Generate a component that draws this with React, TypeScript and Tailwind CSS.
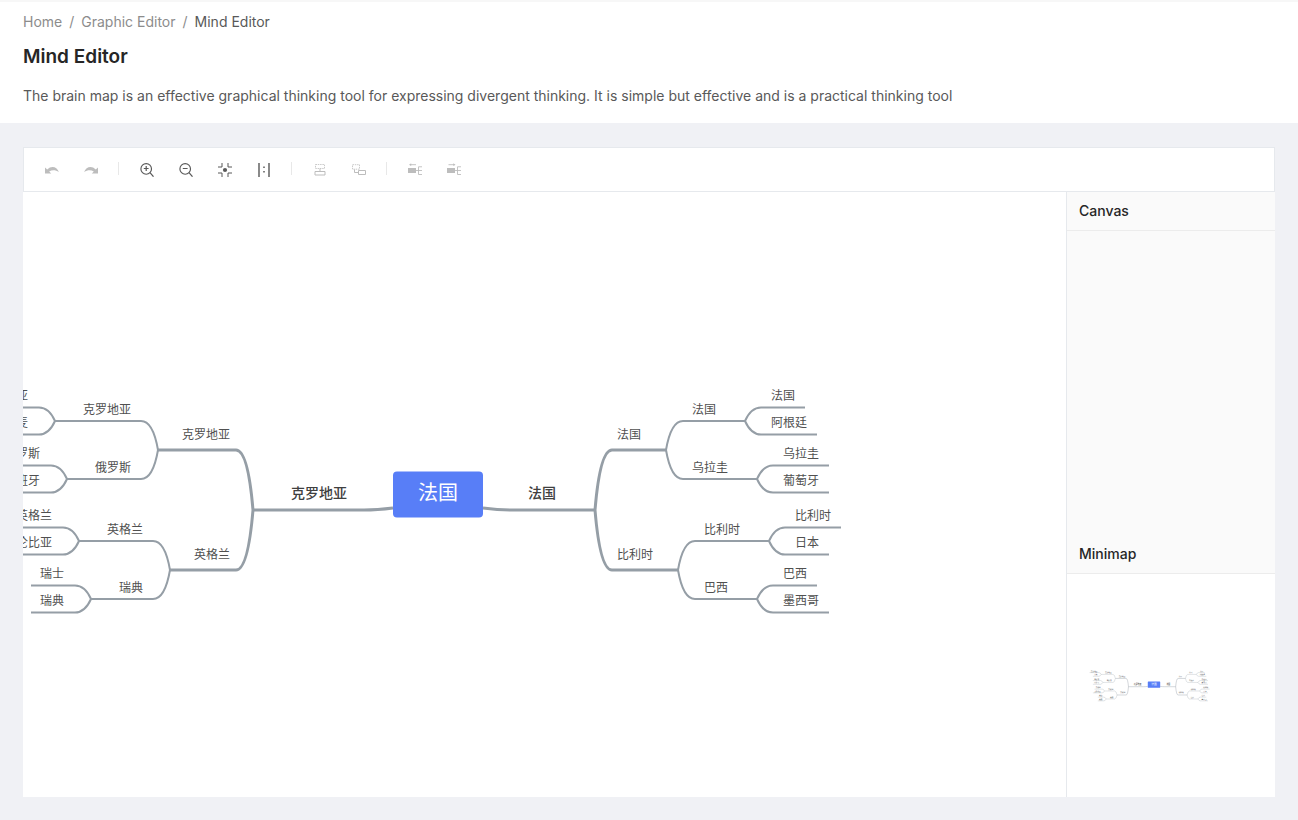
import type { ReactNode } from 'react'

type Topic = { label: string; y: number; children?: Topic[] }

const CENTER = { x: 415, y: 302 }

const rightTree: Topic = {
  label: '法国', y: 318,
  children: [
    {
      label: '法国', y: 258,
      children: [
        { label: '法国', y: 229, children: [{ label: '法国', y: 215 }, { label: '阿根廷', y: 242 }] },
        { label: '乌拉圭', y: 287, children: [{ label: '乌拉圭', y: 273 }, { label: '葡萄牙', y: 300 }] },
      ],
    },
    {
      label: '比利时', y: 378,
      children: [
        { label: '比利时', y: 349, children: [{ label: '比利时', y: 335 }, { label: '日本', y: 362 }] },
        { label: '巴西', y: 407, children: [{ label: '巴西', y: 393 }, { label: '墨西哥', y: 420 }] },
      ],
    },
  ],
}

const leftTree: Topic = {
  label: '克罗地亚', y: 318,
  children: [
    {
      label: '克罗地亚', y: 258,
      children: [
        { label: '克罗地亚', y: 229, children: [{ label: '克罗地亚', y: 215 }, { label: '丹麦', y: 242 }] },
        { label: '俄罗斯', y: 287, children: [{ label: '俄罗斯', y: 273 }, { label: '西班牙', y: 300 }] },
      ],
    },
    {
      label: '英格兰', y: 378,
      children: [
        { label: '英格兰', y: 349, children: [{ label: '英格兰', y: 335 }, { label: '哥伦比亚', y: 362 }] },
        { label: '瑞典', y: 407, children: [{ label: '瑞士', y: 393 }, { label: '瑞典', y: 420 }] },
      ],
    },
  ],
}

// Metrics of each depth: label inset from the joint, tail after the label,
// curve end and control point, stroke width, font size, baseline above the line.
const LEVELS = [
  { inset: 45, tail: 39, bend: 29, control: 16, stroke: 3, font: 14, lift: 12 },
  { inset: 22, tail: 25, bend: 17, control: 5, stroke: 3, font: 12, lift: 11 },
  { inset: 26, tail: 29, bend: 17, control: 5, stroke: 2, font: 12, lift: 7 },
  { inset: 26, tail: 10, bend: 16, control: 6, stroke: 2, font: 12, lift: 7 },
]

function Branch({ topic, depth, x, y, dir }: { topic: Topic; depth: number; x: number; y: number; dir: 1 | -1 }) {
  const m = LEVELS[depth]
  const isLeaf = depth === 3
  const lineY = isLeaf ? topic.y + 0.5 : topic.y
  const end = x + dir * (m.inset + topic.label.length * m.font + m.tail)
  const d = `M${x} ${y}Q${x + dir * m.control} ${lineY} ${x + dir * m.bend} ${lineY}H${end}`
  return (
    <g>
      <path d={d} fill="none" stroke="#959ea6" strokeWidth={m.stroke} strokeLinejoin="round" />
      <text
        x={dir === 1 ? x + m.inset : x - m.inset - 1}
        y={topic.y - m.lift}
        textAnchor={dir === 1 ? 'start' : 'end'}
        fontSize={m.font}
        fontWeight={depth === 0 ? 500 : 400}
        fill={depth === 0 ? '#404040' : '#505050'}
      >
        {topic.label}
      </text>
      {topic.children?.map((c) => (
        <Branch key={c.label + c.y} topic={c} depth={depth + 1} x={end} y={lineY} dir={dir} />
      ))}
    </g>
  )
}

function MindMap() {
  return (
    <g>
      <Branch topic={rightTree} depth={0} x={460} y={316} dir={1} />
      <Branch topic={leftTree} depth={0} x={370} y={316} dir={-1} />
      <rect x={370} y={279.5} width={90} height={46} rx={4} fill="#587ef7" />
      <text x={CENTER.x} y={308} textAnchor="middle" fontSize={20} fill="#fff">法国</text>
    </g>
  )
}

function ToolButton({ label, disabled, children }: { label: string; disabled?: boolean; children: ReactNode }) {
  return (
    <button
      type="button"
      aria-label={label}
      disabled={disabled}
      className="flex h-7 w-[39px] items-center pl-[13px] text-[#595959] disabled:text-[#bdbdbd]"
    >
      <svg width="14" height="14" viewBox="0 0 14 14" fill="none" stroke="currentColor" aria-hidden="true">
        {children}
      </svg>
    </button>
  )
}

function Separator() {
  return <span className="mx-2 mt-1.5 h-[13px] w-px bg-[#e8e8e8]" />
}

export default function App() {
  return (
    <div className="flex min-h-screen flex-col bg-[#f0f1f5] font-['Inter','Noto_Sans_CJK_SC',sans-serif] text-sm text-[#595959]">
      <header className="border-t-2 border-[#f7f7f7] bg-white px-[23px] pt-[9px] pb-4">
        <nav aria-label="Breadcrumb">
          <ol className="flex gap-[7px] leading-[22px] text-[#8c8c8c]">
            <li><a href="#home">Home</a></li>
            <li aria-hidden="true">/</li>
            <li><a href="#graphic-editor">Graphic Editor</a></li>
            <li aria-hidden="true">/</li>
            <li className="text-[#595959]">Mind Editor</li>
          </ol>
        </nav>
        <h1 className="mt-2 text-[19px] leading-8 font-semibold text-[#262626]">Mind Editor</h1>
        <p className="mt-3 leading-[22px]">
          The brain map is an effective graphical thinking tool for expressing divergent thinking. It is simple but effective and is a practical thinking tool
        </p>
      </header>

      <main className="mx-[23px] mt-6 mb-[23px] flex flex-1 flex-col bg-white">
        <div role="toolbar" aria-label="Editor tools" className="flex h-[45px] items-start border border-[#e6e9ed] px-2 pt-2">
          <ToolButton label="Undo" disabled>
            <path d="M0 4.500V10.500H6.200L4.200 8.500C7 6.600 10.500 6.700 13.900 9C12 3.800 6.500 2 2.200 6.500Z" fill="currentColor" stroke="none" />
          </ToolButton>
          <ToolButton label="Redo" disabled>
            <path d="M14 4.500V10.500H7.800L9.800 8.500C7 6.600 3.500 6.700 .1 9C2 3.800 7.500 2 11.800 6.500Z" fill="currentColor" stroke="none" />
          </ToolButton>
          <Separator />
          <ToolButton label="Zoom in">
            <circle cx="6.200" cy="5.900" r="5.300" strokeWidth="1.150" />
            <path d="M3.800 5.500H8.600M6.200 3.100V7.900M10 9.700L13.500 13.700" strokeWidth="1.200" />
          </ToolButton>
          <ToolButton label="Zoom out">
            <circle cx="6.200" cy="5.900" r="5.300" strokeWidth="1.150" />
            <path d="M3.800 5.500H8.600M10 9.700L13.500 13.700" strokeWidth="1.200" />
          </ToolButton>
          <ToolButton label="Fit canvas">
            <circle cx="7" cy="7" r="2.100" fill="currentColor" stroke="none" />
            <path d="M4 0V4H0M10 0V4H14M4 14V10H0M10 14V10H14" />
          </ToolButton>
          <ToolButton label="Actual size">
            <path d="M2 0V14M12 0V14" strokeWidth="1.400" />
            <path d="M7 3.500V5M7 8V9.500" strokeWidth="1.500" />
          </ToolButton>
          <Separator />
          <ToolButton label="Insert topic" disabled>
            <path d="M2.500 1.500H11.500V5.500H2.500Z" strokeDasharray="1.500 .8" strokeWidth=".8" />
            <path d="M7 5.500V8.500M2 8.500H12V12H2Z" />
          </ToolButton>
          <ToolButton label="Insert subtopic" disabled>
            <path d="M.5 1.700H7.500V6.200H.5Z" strokeDasharray="1.500 .8" strokeWidth=".8" />
            <path d="M2.500 6.500V9.500H6.500M6.500 7.500H13.500V11.500H6.500Z" />
          </ToolButton>
          <Separator />
          <ToolButton label="Collapse" disabled>
            <path d="M0 5H8V10H0Z" fill="currentColor" stroke="none" />
            <path d="M2 1.700H8M8 7.500H14M14 3.800H10.500V11.500H14" strokeWidth=".9" />
            <path d="M1 1.700L3.200 .3V3.100Z" fill="currentColor" stroke="none" />
          </ToolButton>
          <ToolButton label="Expand" disabled>
            <path d="M0 5H8V10H0Z" fill="currentColor" stroke="none" />
            <path d="M1.500 1.700H7.500M8 7.500H14M14 3.800H10.500V11.500H14" strokeWidth=".9" />
            <path d="M8.500 1.700L6.300 .3V3.100Z" fill="currentColor" stroke="none" />
          </ToolButton>
        </div>

        <div className="flex flex-1">
          <section aria-label="Mind map" className="flex min-w-0 flex-1 overflow-hidden">
            <svg className="min-h-[480px] w-full flex-1 overflow-hidden">
              <MindMap />
            </svg>
          </section>

          <aside className="flex w-[209px] flex-col border-l border-[#e6e9ed] bg-[#fafafa]">
            <section className="flex-1">
              <h2 className="border-b border-[#ececec] px-3 py-2 leading-[22px] font-medium text-[#262626]">Canvas</h2>
            </section>
            <section>
              <h2 className="border-b border-[#ececec] px-3 py-2 leading-[22px] font-medium text-[#262626]">Minimap</h2>
              <svg className="block h-[223px] w-full bg-white" aria-label="Minimap">
                <g transform={`translate(87 110.500) scale(0.138) translate(${-CENTER.x} ${-CENTER.y})`}>
                  <MindMap />
                </g>
              </svg>
            </section>
          </aside>
        </div>
      </main>
    </div>
  )
}
